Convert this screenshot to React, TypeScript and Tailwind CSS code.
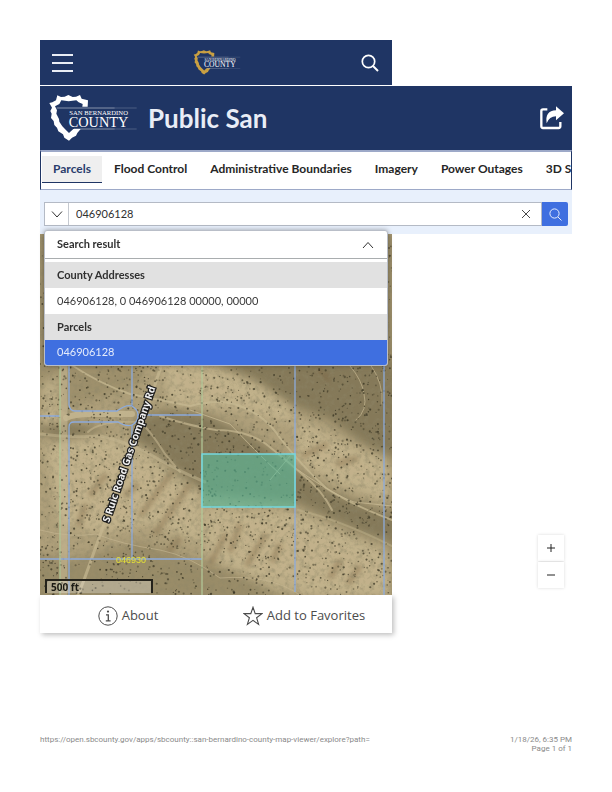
import { useState } from "react";

const tabs = ["Parcels", "Flood Control", "Administrative Boundaries", "Imagery", "Power Outages", "3D S"];

// Small seeded generator so the desert scrub looks the same on every load
function makeShrubs(count: number) {
  let seed = 4711;
  const next = () => {
    seed = (seed * 16807) % 2147483647;
    return seed / 2147483647;
  };
  return Array.from({ length: count }, () => ({
    x: Math.round(next() * 3520) / 10,
    y: Math.round(next() * 3610) / 10,
    r: Math.round(50 + next() * 65) / 100,
    o: Math.round(40 + next() * 45) / 100,
  }));
}

const shrubs = makeShrubs(3000);

function CountyLogo({ shield, className }: { shield: string; className: string }) {
  return (
    <svg viewBox="0 0 270 150" className={className} role="img" aria-label="San Bernardino County">
      <path
        fill={shield}
        d="M4 30 L13 28 L24 22 L28 7 L39 12 L50 11 L61 6 L74 12 L84 11 L96 6 L101 17 L120 22 L119 41 L103 41 L104 33 L92 28 L85 22 L62 25 L40 22 L34 33 L21 40 L27 52 L25 62 L33 78 L34 86 L43 100 L53 110 L63 120 L76 108 L98 108 L88 120 L84 128 L72 134 L63 143 L49 134 L45 124 L31 115 L27 104 L19 96 L17 84 L9 75 L11 62 L7 54 L12 44 Z"
      />
      <path d="M26 45 H200" stroke="#fff" strokeWidth="2" opacity="0.7" />
      <path d="M200 45 H266" stroke="#fff" strokeWidth="2" opacity="0.3" />
      <path d="M78 108 H200" stroke="#fff" strokeWidth="2" opacity="0.7" />
      <path d="M200 108 H266" stroke="#fff" strokeWidth="2" opacity="0.3" />
      <text x="64" y="67" fontSize="20" fill="#fff" fontFamily="Liberation Serif, serif">SAN BERNARDINO</text>
      <text x="62" y="101" fontSize="43" fill="#fff" fontFamily="Liberation Serif, serif">COUNTY</text>
    </svg>
  );
}

function Aerial() {
  return (
    <svg
      viewBox="0 0 352 361"
      preserveAspectRatio="xMidYMid slice"
      className="block h-[361px] w-full"
      role="img"
      aria-label="Aerial map with parcel lines"
    >
      <defs>
        <filter id="soft" x="-20%" y="-20%" width="140%" height="140%">
          <feGaussianBlur stdDeviation="5" />
        </filter>
        <filter id="softer" x="-20%" y="-20%" width="140%" height="140%">
          <feGaussianBlur stdDeviation="2" />
        </filter>
        <filter id="grain" x="0" y="0" width="100%" height="100%">
          <feTurbulence type="fractalNoise" baseFrequency="0.2" numOctaves="4" seed="8" />
          <feColorMatrix values="0 0 0 0 0.27  0 0 0 0 0.24  0 0 0 0 0.14  0 2.4 0 0 -1.05" />
        </filter>
      </defs>
      <rect width="352" height="361" fill="#ae9f7a" />

      {/* shaded slopes */}
      <g filter="url(#soft)" fill="#5f573a" opacity="0.52">
        <path d="M-10 0 H120 L100 150 L-10 185 Z" opacity="0.4" />
        <path d="M95 184 L130 176 L165 180 L215 205 L255 232 L255 268 L165 260 L130 244 L95 210 Z" />
        <path d="M172 128 L255 126 L360 130 V224 L330 214 L290 186 L250 170 L215 146 Z" />
        <path d="M250 232 L290 258 L360 284 V312 L320 298 L255 268 Z" />
        <path d="M-10 192 L30 188 L70 198 L20 206 Z" />
        <path d="M-10 318 L30 326 L100 308 L165 330 L260 352 V370 H-10 Z" opacity="0.5" />
        <path d="M344 0 H362 V361 H350 Z" opacity="0.5" />
      </g>
      {/* sunlit ridges */}
      <g filter="url(#soft)" fill="#cfbf97" opacity="0.6">
        <path d="M120 125 L175 134 L215 150 L250 172 L255 192 L200 176 L130 170 Z" />
        <path d="M5 212 L60 202 L110 214 L160 256 L162 310 L110 290 L60 300 L20 290 Z" />
        <path d="M165 274 L255 278 L350 320 V361 H240 L165 320 Z" />
        <path d="M256 184 L300 206 L352 230 V270 L300 250 L258 228 Z" />
        <path d="M0 150 L20 140 V190 L0 190 Z" />
      </g>
      {/* gullies */}
      <g filter="url(#softer)" fill="none" stroke="#7b6443" strokeWidth="6" opacity="0.4">
        <path d="M150 250 L115 300 M132 238 L100 282 M98 250 L84 262 M186 300 L170 330 M226 300 L206 332 M240 310 L232 328" />
        <path d="M288 210 L262 222 M318 224 L296 230 M300 326 L290 344 M320 332 L308 350 M276 134 L290 146" />
        <path d="M200 290 L190 318 M140 304 L128 318 M46 270 L38 292 M66 240 L50 262" />
      </g>
      <rect width="352" height="361" filter="url(#grain)" opacity="0.5" />

      {/* dirt roads and washes */}
      <g fill="none" stroke="#c6b892" strokeLinecap="round">
        <path d="M24 0 V361" strokeWidth="7" opacity="0.6" />
        <path d="M26 184 Q34 180 50 180 H92" strokeWidth="6" opacity="0.8" />
        <path d="M125 120 L112 160 L86 232 L64 290 L44 346 L38 361" strokeWidth="3" opacity="0.7" />
        <path d="M0 200 Q30 204 60 202 Q80 206 106 218 Q136 236 165 248" strokeWidth="3" opacity="0.5" />
        <path d="M48 198 Q60 186 100 188 Q110 196 125 220 L140 238" strokeWidth="2" opacity="0.55" />
        <path d="M30 130 Q60 150 90 160 L150 172 Q180 164 200 172 Q226 182 240 204 Q262 232 286 254 Q310 270 352 286" strokeWidth="2" opacity="0.75" />
        <path d="M120 182 Q150 192 176 196 Q206 196 226 210 Q246 226 262 240 Q282 256 292 276" strokeWidth="2" opacity="0.7" />
        <path d="M150 176 L190 190 Q220 222 240 240 M230 246 L250 222 M258 236 Q296 262 314 268 L352 272" strokeWidth="1" opacity="0.8" />
        <path d="M310 132 Q322 146 324 160 Q328 176 316 186 M330 130 Q344 150 342 170" strokeWidth="1" opacity="0.7" />
        <path d="M0 296 Q30 304 56 300 Q80 310 120 316 Q150 322 180 344 Q230 340 260 361" strokeWidth="1" opacity="0.6" />
        <path d="M258 276 Q300 286 352 312" strokeWidth="2" opacity="0.4" />
      </g>

      <g fill="#3d3926">
        {shrubs.map((s, i) => (
          <circle key={i} cx={s.x} cy={s.y} r={s.r} opacity={s.o} />
        ))}
      </g>

      {/* parcel boundaries */}
      <g fill="none" stroke="#8dabdc" strokeWidth="1.3">
        <path d="M29 0 V171 Q30 177 35 177 H77 Q86 170 92 172 V0" />
        <path d="M92 172 Q98 176 98 181 H162 M0 182 H20" />
        <path d="M29 361 V193 Q29 188 34 188 H78 Q86 193 92 191 V325" />
        <path d="M98 181 Q98 188 92 191" />
        <path d="M0 325 H162 M255 0 V358 M344 0 V361" />
      </g>
      <g fill="none" stroke="#b4cb9b" strokeWidth="1.2">
        <path d="M20 0 V361 M162 0 V361" />
      </g>
      <rect x="162" y="220" width="93" height="53" fill="#55bb9c" fillOpacity="0.58" stroke="#75d8de" strokeWidth="1.5" />

      <text
        transform="translate(69 289) rotate(-71)"
        fontSize="10"
        fontWeight="700"
        fontFamily="Noto Sans, sans-serif"
        fill="#f1f1f1"
        stroke="#1d1d1d"
        strokeWidth="2.5"
        paintOrder="stroke"
      >
        S Ruic Road Gas Company Rd
      </text>
      <text x="76" y="329" fontSize="9" fontFamily="Liberation Sans, sans-serif" fill="#e6e336">046930</text>
    </svg>
  );
}

function SearchResults() {
  return (
    <div className="absolute inset-x-1 -top-1 overflow-hidden rounded-[3px] border border-[#b9bec8] bg-white text-[11px] text-[#3a3a3a] shadow-[0_0_5px_rgba(0,0,0,0.35)]">
      <button className="flex h-7 w-full items-center justify-between border-b border-[#a9adaf] px-3 font-bold text-[#303030]">
        Search result
        <svg viewBox="0 0 12 12" className="mr-px size-3" fill="none" stroke="#333">
          <path d="M1 9 L6 3.5 L11 9" />
        </svg>
      </button>
      <div className="pt-[3px]">
        <h2 className="flex h-[26px] items-center bg-[#e1e1e1] px-3 font-bold text-[#303030]">County Addresses</h2>
        <button className="flex h-[26px] w-full items-center px-3">046906128, 0 046906128 00000, 00000</button>
        <h2 className="flex h-[26px] items-center bg-[#e1e1e1] px-3 font-bold text-[#303030]">Parcels</h2>
        <button className="flex h-[25px] w-full items-center bg-[#3f6fe0] px-3 text-[#e4ebfb]">046906128</button>
      </div>
    </div>
  );
}

export default function App() {
  const [active, setActive] = useState("Parcels");
  const [query, setQuery] = useState("046906128");

  return (
    <div className="min-h-screen bg-white p-10 font-['Lato',sans-serif]">
      {/* Site bar */}
      <div className="mr-[180px] flex h-[45px] items-center justify-between bg-[#1f3564] pr-[13px] pl-3">
        <button aria-label="Menu" className="flex w-[21px] flex-col gap-1.5">
          <span className="h-0.5 bg-[#e9edf5]" />
          <span className="h-0.5 bg-[#e9edf5]" />
          <span className="h-0.5 bg-[#e9edf5]" />
        </button>
        <CountyLogo shield="#c9a042" className="h-[27px] w-12" />
        <button aria-label="Search site">
          <svg viewBox="0 0 18 18" className="size-[18px]" fill="none" stroke="#fff" strokeWidth="1.7">
            <circle cx="7.5" cy="7.5" r="6.2" />
            <path d="M12 12 L17 17" strokeWidth="2" />
          </svg>
        </button>
      </div>

      {/* App header */}
      <header className="mt-px flex h-16 items-center bg-[#1f3564] px-2">
        <CountyLogo shield="#fff" className="h-[50px] w-[90px]" />
        <h1 className="ml-[10px] flex-1 text-[26px] leading-8 font-bold text-[#e9edf6]">Public San</h1>
        <button aria-label="Share">
          <svg viewBox="0 0 72 72" className="size-6" fill="none">
            <path d="M22 10 H9 Q4 10 4 15 V61 Q4 66 9 66 H56 Q61 66 61 61 V48" stroke="#fff" strokeWidth="7" />
            <path d="M48 1 L72 22 L48 43 V31 Q28 31 20 52 Q14 14 48 13 Z" fill="#fff" />
          </svg>
        </button>
      </header>

      <nav
        role="tablist"
        className="flex h-10 items-start gap-px overflow-hidden border border-t-2 border-[#1f3564] border-t-[#9da9c8] border-b-[#9da9c8] pt-1 pl-px"
      >
        {tabs.map((tab) => (
          <button
            key={tab}
            role="tab"
            aria-selected={tab === active}
            onClick={() => setActive(tab)}
            className={
              tab === active
                ? "h-[27px] shrink-0 border-b border-[#1f3564] bg-[#efefef] px-[11px] text-xs font-bold text-[#2a3d6c]"
                : "h-[27px] shrink-0 border-b border-transparent px-[11px] text-xs font-bold text-[#262626]"
            }
          >
            {tab}
          </button>
        ))}
      </nav>

      {/* Search */}
      <form className="flex h-11 items-center bg-[#e8f0fc] px-1 pt-1" onSubmit={(e) => e.preventDefault()}>
        <div className="flex h-6 flex-1 border border-[#b4bac5] bg-white">
          <button type="button" aria-label="Choose source" className="flex w-6 items-center justify-center border-r border-[#c5c9d0]">
            <svg viewBox="0 0 12 12" className="size-3" fill="none" stroke="#333">
              <path d="M1 3.5 L6 9 L11 3.5" />
            </svg>
          </button>
          <input
            aria-label="Search address or parcel"
            value={query}
            onChange={(e) => setQuery(e.target.value)}
            className="min-w-0 flex-1 px-[7px] text-[11px] text-[#303030] outline-none"
          />
          <button type="button" aria-label="Clear" onClick={() => setQuery("")} className="flex w-[30px] items-center justify-center">
            <svg viewBox="0 0 10 10" className="size-[10px]" fill="none" stroke="#333" strokeWidth="0.9">
              <path d="M1 1 L9 9 M9 1 L1 9" />
            </svg>
          </button>
        </div>
        <button aria-label="Search" className="flex h-6 w-[26px] items-center justify-center rounded-r-[2px] bg-[#3f6fe0]">
          <svg viewBox="0 0 13 13" className="size-[13px]" fill="none" stroke="#e8effd" strokeWidth="1">
            <circle cx="5.5" cy="5.5" r="4.6" />
            <path d="M9 9 L12.5 12.5" />
          </svg>
        </button>
      </form>

      <div className="flex">
        <main className="relative min-w-0 flex-1">
          <div className="relative">
            <Aerial />
            <div className="absolute bottom-0.5 left-[5px] h-[14px] w-[108px] border-2 border-b-0 border-[#24221a] bg-white/25 pl-1 font-['Noto_Sans',sans-serif] text-[10px] leading-[12px] font-bold text-[#1c1b14]">
              500 ft
            </div>
          </div>
          <SearchResults />
          <div className="grid h-[38px] grid-cols-2 items-center bg-white pt-1 font-['Open_Sans',sans-serif] text-[13px] text-[#4c4c4c] shadow-[2px_2px_5px_rgba(0,0,0,0.25)]">
            <button className="flex items-center justify-center gap-1">
              <svg viewBox="0 0 20 20" className="size-5" fill="none" stroke="#4c4c4c">
                <circle cx="10" cy="10" r="9.2" />
                <circle cx="10" cy="5.6" r="1.1" fill="#4c4c4c" stroke="none" />
                <path d="M8 8.8 H10.3 V14.6 M7.8 14.8 H12.6" strokeWidth="1.3" />
              </svg>
              About
            </button>
            <button className="flex items-center justify-center gap-1">
              <svg viewBox="0 0 20 20" className="size-5" fill="none" stroke="#4c4c4c" strokeWidth="1.1">
                <path d="M10 1.2 L12.2 7.6 H19 L13.6 11.7 L15.6 18.4 L10 14.4 L4.4 18.4 L6.4 11.7 L1 7.6 H7.8 Z" />
              </svg>
              Add to Favorites
            </button>
          </div>
        </main>

        {/* Map zoom */}
        <aside className="flex h-[361px] w-[180px] items-end justify-end pr-2 pb-[7px]">
          <div className="flex flex-col gap-px">
            <button aria-label="Zoom in" className="flex size-[26px] items-center justify-center bg-white shadow-[0_0_3px_rgba(0,0,0,0.15)]">
              <svg viewBox="0 0 8 8" className="size-2" stroke="#222">
                <path d="M0 4 H8 M4 0 V8" />
              </svg>
            </button>
            <button aria-label="Zoom out" className="flex size-[26px] items-center justify-center bg-white shadow-[0_0_3px_rgba(0,0,0,0.15)]">
              <svg viewBox="0 0 8 8" className="size-2" stroke="#222">
                <path d="M0 4 H8" />
              </svg>
            </button>
          </div>
        </aside>
      </div>

      <footer className="mt-[102px] flex justify-between font-['Roboto',sans-serif] text-[8px] leading-[9px] text-[#8a8a8a]">
        <p>https://open.sbcounty.gov/apps/sbcounty::san-bernardino-county-map-viewer/explore?path=</p>
        <p className="text-right">
          1/18/26, 6:35 PM
          <br />
          Page 1 of 1
        </p>
      </footer>
    </div>
  );
}
